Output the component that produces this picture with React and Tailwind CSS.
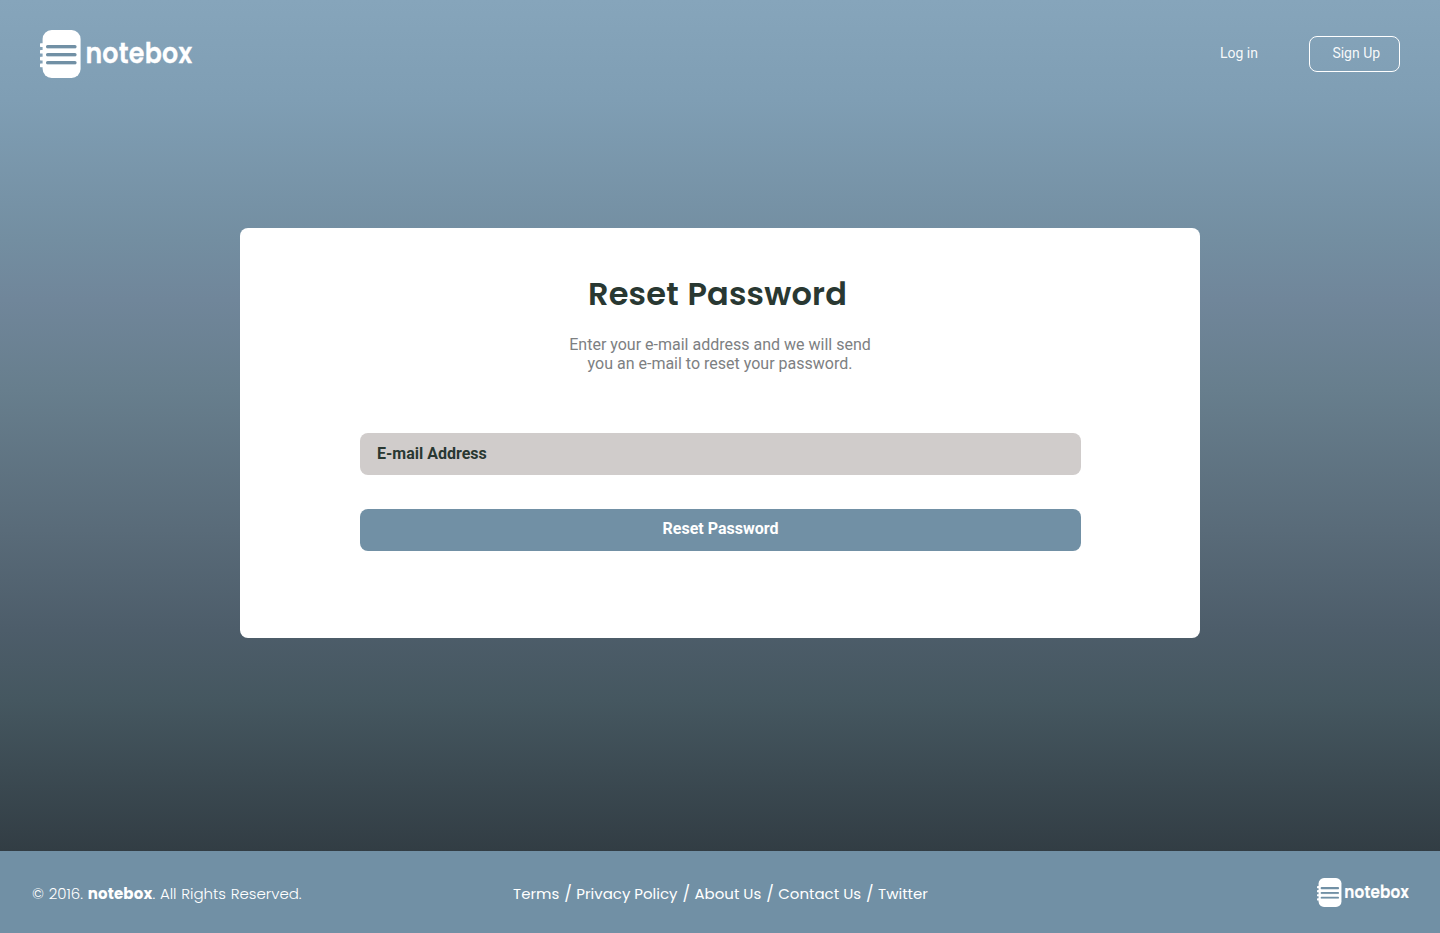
const poppins = "font-['Poppins','Inter',sans-serif] [font-feature-settings:'cv11'_1]";

function Logo({ className }) {
  return (
    <svg viewBox="0 0 156 48" className={`overflow-visible ${className}`} aria-label="notebox">
      <rect x="2.6" y="0" width="38" height="48" rx="9" fill="#fff" />
      {[13.3, 20, 26.8, 33.6].map((y) => (
        <rect key={y} x="0" y={y} width="6" height="3.6" rx="0.6" fill="#fff" />
      ))}
      {[15, 23, 31].map((y) => (
        <g key={y}>
          <rect x="6" y={y} width="30.6" height="3.4" rx="1.6" fill="#7190a5" />
          <rect x="7" y={y + 3.2} width="29" height="0.6" fill="#dbe3e9" />
        </g>
      ))}
      <text x="45.4" y="33.3" fill="#fff" stroke="#fff" strokeWidth="0.3" fontSize="28" fontWeight="600" letterSpacing="0.3" textLength="107" lengthAdjust="spacingAndGlyphs" className="font-['Poppins','Inter',sans-serif]">notebox</text>
    </svg>
  );
}

const links = ["Terms", "Privacy Policy", "About Us", "Contact Us", "Twitter"];

export default function App() {
  return (
    <div className="flex h-[933px] w-full flex-col overflow-hidden bg-[linear-gradient(180deg,#86a5bb_0px,#7f9eb4_100px,#738ea1_240px,#70869a_300px,#677e8d_390px,#596b79_530px,#4d5d6a_630px,#455760_700px,#323d44_851px)] font-[Roboto,sans-serif]">
      <header className="flex h-[108px] shrink-0 items-center justify-between px-10">
        <Logo className="h-12 w-[156px]" />
        <nav className="flex items-center text-[14px] text-white/95">
          <a className="mr-[51px] pb-[2px]">Log in</a>
          <a className="flex h-9 w-[91px] items-center rounded-lg border border-white pb-[2px] pl-[22.4px]">Sign Up</a>
        </nav>
      </header>
      <main className="flex flex-1 flex-col items-center pt-[120px]">
        <section className="flex h-[409.5px] w-[960px] flex-col items-center rounded-lg bg-white pt-[42px]">
          <h1 className={`${poppins} mr-[5px] whitespace-nowrap text-[32px] leading-[48px] font-semibold tracking-[0.2px] [word-spacing:0.8px] text-[#293832]`}>Reset Password</h1>
          <p className="mt-[17px] text-center text-[16px] leading-[19px] text-[#7d8082]">
            Enter your e-mail address and we will send<br />you an e-mail to reset your password.
          </p>
          <form className="ml-px mt-[60px] flex w-[721px] flex-col gap-[34px]">
            <input aria-label="E-mail Address" placeholder="E-mail Address" className="h-[42px] rounded-lg bg-[#d0cccb] px-[17px] pb-[2px] text-[16px] font-bold text-[#293832] placeholder:text-[#293832] placeholder:opacity-100" />
            <button type="button" className="h-[42px] rounded-lg bg-[#7190a5] pb-[3px] text-[16px] font-bold text-white">Reset Password</button>
          </form>
        </section>
      </main>
      <footer className={`${poppins} grid h-[82px] shrink-0 grid-cols-[481px_1fr_481px] items-center bg-[#7190a5] text-[15px] text-white`}>
        <p className="pl-8 pt-1 font-light tracking-[-0.02px] [word-spacing:0.7px] whitespace-nowrap">© 2016. <strong className="font-bold tracking-[0.15px]">notebox</strong>. All Rights Reserved.</p>
        <nav className="flex items-center justify-center gap-[5px] whitespace-nowrap pl-px pt-1 tracking-[-0.01px]">
          {links.map((label, i) => (
            <span key={label} className="flex items-center gap-[5px]">
              {i > 0 && <span className="w-[7px] text-center text-[16px] leading-[22px]">/</span>}
              <a>{label}</a>
            </span>
          ))}
        </nav>
        <Logo className="mr-[29px] h-[29px] w-[94px] justify-self-end" />
      </footer>
    </div>
  );
}
